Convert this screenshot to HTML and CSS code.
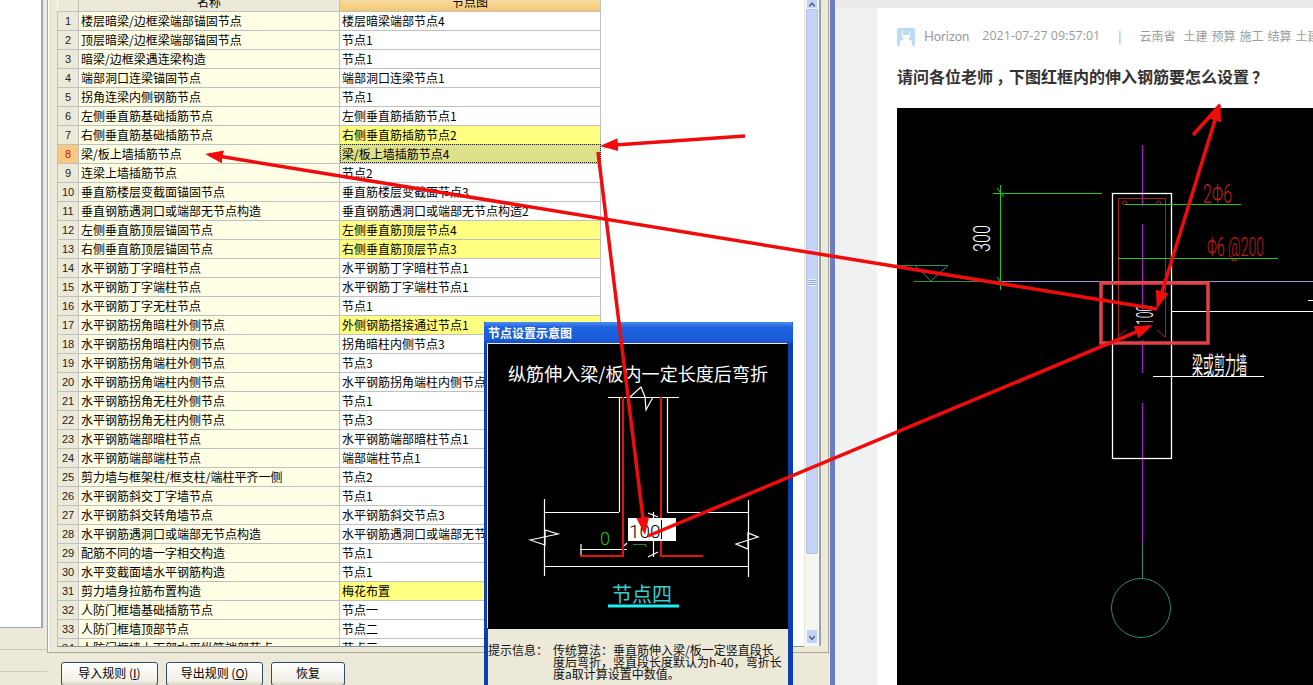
FILE: index.html
```html
<!DOCTYPE html>
<html>
    <head>
        <title>节点设置</title>
        <link rel="stylesheet" href="styles.css">
    </head>
    <body>
        <div class="desk">
            <div class="side">
                <div class="side_list"></div>
                <div class="side_row"></div>
                <div class="side_row"></div>
            </div>
            <div class="main">
                <div class="rule_panel">
                    <div class="grid">
                        <table class="rules">
                            <colgroup><col class="col_no"><col class="col_name"><col class="col_value"></colgroup>
                            <tr class="head"><th></th><th><span>名称</span></th><th class="head_on"><span>节点图</span></th></tr>
                            <tr><td class="no">1</td><td class="name">楼层暗梁/边框梁端部锚固节点</td><td>楼层暗梁端部节点4</td></tr>
                            <tr><td class="no">2</td><td class="name">顶层暗梁/边框梁端部锚固节点</td><td>节点1</td></tr>
                            <tr><td class="no">3</td><td class="name">暗梁/边框梁遇连梁构造</td><td>节点1</td></tr>
                            <tr><td class="no">4</td><td class="name">端部洞口连梁锚固节点</td><td>端部洞口连梁节点1</td></tr>
                            <tr><td class="no">5</td><td class="name">拐角连梁内侧钢筋节点</td><td>节点1</td></tr>
                            <tr><td class="no">6</td><td class="name">左侧垂直筋基础插筋节点</td><td>左侧垂直筋插筋节点1</td></tr>
                            <tr><td class="no">7</td><td class="name">右侧垂直筋基础插筋节点</td><td class="changed">右侧垂直筋插筋节点2</td></tr>
                            <tr><td class="no no_on">8</td><td class="name">梁/板上墙插筋节点</td><td class="picked">梁/板上墙插筋节点4</td></tr>
                            <tr><td class="no">9</td><td class="name">连梁上墙插筋节点</td><td>节点2</td></tr>
                            <tr><td class="no">10</td><td class="name">垂直筋楼层变截面锚固节点</td><td>垂直筋楼层变截面节点3</td></tr>
                            <tr><td class="no">11</td><td class="name">垂直钢筋遇洞口或端部无节点构造</td><td>垂直钢筋遇洞口或端部无节点构造2</td></tr>
                            <tr><td class="no">12</td><td class="name">左侧垂直筋顶层锚固节点</td><td class="changed">左侧垂直筋顶层节点4</td></tr>
                            <tr><td class="no">13</td><td class="name">右侧垂直筋顶层锚固节点</td><td class="changed">右侧垂直筋顶层节点3</td></tr>
                            <tr><td class="no">14</td><td class="name">水平钢筋丁字暗柱节点</td><td>水平钢筋丁字暗柱节点1</td></tr>
                            <tr><td class="no">15</td><td class="name">水平钢筋丁字端柱节点</td><td>水平钢筋丁字端柱节点1</td></tr>
                            <tr><td class="no">16</td><td class="name">水平钢筋丁字无柱节点</td><td>节点1</td></tr>
                            <tr><td class="no">17</td><td class="name">水平钢筋拐角暗柱外侧节点</td><td class="changed">外侧钢筋搭接通过节点1</td></tr>
                            <tr><td class="no">18</td><td class="name">水平钢筋拐角暗柱内侧节点</td><td>拐角暗柱内侧节点3</td></tr>
                            <tr><td class="no">19</td><td class="name">水平钢筋拐角端柱外侧节点</td><td>节点3</td></tr>
                            <tr><td class="no">20</td><td class="name">水平钢筋拐角端柱内侧节点</td><td>水平钢筋拐角端柱内侧节点1</td></tr>
                            <tr><td class="no">21</td><td class="name">水平钢筋拐角无柱外侧节点</td><td>节点1</td></tr>
                            <tr><td class="no">22</td><td class="name">水平钢筋拐角无柱内侧节点</td><td>节点3</td></tr>
                            <tr><td class="no">23</td><td class="name">水平钢筋端部暗柱节点</td><td>水平钢筋端部暗柱节点1</td></tr>
                            <tr><td class="no">24</td><td class="name">水平钢筋端部端柱节点</td><td>端部端柱节点1</td></tr>
                            <tr><td class="no">25</td><td class="name">剪力墙与框架柱/框支柱/端柱平齐一侧</td><td>节点2</td></tr>
                            <tr><td class="no">26</td><td class="name">水平钢筋斜交丁字墙节点</td><td>节点1</td></tr>
                            <tr><td class="no">27</td><td class="name">水平钢筋斜交转角墙节点</td><td>水平钢筋斜交节点3</td></tr>
                            <tr><td class="no">28</td><td class="name">水平钢筋遇洞口或端部无节点构造</td><td>水平钢筋遇洞口或端部无节点构造1</td></tr>
                            <tr><td class="no">29</td><td class="name">配筋不同的墙一字相交构造</td><td>节点1</td></tr>
                            <tr><td class="no">30</td><td class="name">水平变截面墙水平钢筋构造</td><td>节点1</td></tr>
                            <tr><td class="no">31</td><td class="name">剪力墙身拉筋布置构造</td><td class="changed">梅花布置</td></tr>
                            <tr><td class="no">32</td><td class="name">人防门框墙基础插筋节点</td><td>节点一</td></tr>
                            <tr><td class="no">33</td><td class="name">人防门框墙顶部节点</td><td>节点二</td></tr>
                            <tr><td class="no">34</td><td class="name">人防门框墙上下部水平纵筋端部节点</td><td>节点三</td></tr>
                        </table>
                    </div>
                    <div class="scrollbar">
                        <div class="scroll_btn scroll_top">
                            <svg width="13" height="8" viewBox="0 0 13 8"><path d="M3 7 L6.5 3 L10 7" fill="none" stroke="#4d6185" stroke-width="2"/></svg>
                        </div>
                        <div class="scroll_thumb"><span class="grip"></span></div>
                        <div class="scroll_rest"></div>
                        <div class="scroll_btn scroll_down">
                            <svg width="13" height="15" viewBox="0 0 13 15"><path d="M3 6 L6.5 10 L10 6" fill="none" stroke="#4d6185" stroke-width="2"/></svg>
                        </div>
                    </div>
                </div>
                <div class="actions">
                    <button class="btn" type="button">导入规则 (<u>I</u>)</button>
                    <button class="btn" type="button">导出规则 (<u>O</u>)</button>
                    <button class="btn btn_small" type="button">恢复</button>
                </div>
            </div>
            <div class="browser">
                <div class="post">
                    <div class="post_meta">
                        <svg class="avatar" width="18" height="18" viewBox="0 0 18 18">
                            <rect width="18" height="18" rx="2" fill="#bcdcf6"/>
                            <path d="M5 3 H13 V8 C13 10 11 11 11 11 L15 13 V18 H3 V13 L7 11 C7 11 5 10 5 8 Z" fill="#fff"/>
                            <rect x="6" y="3" width="6" height="4" fill="#bcdcf6"/>
                        </svg>
                        <span class="author">Horizon</span>
                        <span class="date">2021-07-27 09:57:01</span>
                        <span class="sep">|</span>
                        <span class="place">云南省</span>
                        <span class="tags">土建 预算 施工 结算 土建</span>
                    </div>
                    <h1 class="post_title">请问各位老师<span class="punct">，</span>下图红框内的伸入钢筋要怎么设置<span class="punct">？</span></h1>
                    <div class="cad_box">
                        <svg class="cad" width="416" height="577" viewBox="897 108 416 577" fill="none">
                            <g stroke="#a21fc0" stroke-width="1.300">
                                <path d="M1142.500 145 V206 M1142.500 224 V310 M1142.500 340 V373 M1142.500 403 V543"/>
                            </g>
                            <path d="M1142.500 543 V578" stroke="#25906a"/>
                            <circle cx="1141" cy="608" r="29.500" stroke="#25906a"/>
                            <rect x="1112.500" y="193.500" width="59" height="265" stroke="#fff" stroke-width="1.300"/>
                            <path d="M1118.500 337 V198.500 H1165.500 V337 M1118 337 L1126 330 M1165 337 L1157 330" stroke="#a82020"/>
                            <circle cx="1124.500" cy="203" r="2" stroke="#a82020"/>
                            <circle cx="1158.500" cy="203" r="2" stroke="#a82020"/>
                            <path d="M993 193.500 H1102 M1000.500 185 V290 M997 188 L1004 197 M997 277 L1004 286 M1125 204.500 H1241 M1118 258.500 H1278" stroke="#22c722"/>
                            <path d="M897 265.500 H948 L931 281 L915 265.500 M914 281.500 H1002" stroke="#259058"/>
                            <path d="M1002 281.500 H1313" stroke="#a48fe0"/>
                            <path d="M1172 311.500 H1313 M1153 376.500 H1264 M1308 300.500 H1313" stroke="#fff" stroke-width="1.200"/>
                            <text class="cad_text" transform="translate(990,252) rotate(-90) scale(1,1.300)" font-size="19" fill="#fff" textLength="27" lengthAdjust="spacingAndGlyphs">300</text>
                            <text class="cad_text" transform="translate(1153,325) rotate(-90) scale(1,1.300)" font-size="19" fill="#fff" textLength="20" lengthAdjust="spacingAndGlyphs">100</text>
                            <text class="cad_text" transform="translate(1203,203) scale(1,1.350)" font-size="19" fill="#c22020" textLength="29" lengthAdjust="spacingAndGlyphs">2Φ6</text>
                            <text class="cad_text" transform="translate(1207,256) scale(1,1.350)" font-size="19" fill="#c22020" textLength="57" lengthAdjust="spacingAndGlyphs">Φ6 @200</text>
                            <text class="cad_cn" transform="translate(1192,374) scale(.55,1.200)" font-size="20" fill="#fff">梁或剪力墙</text>
                        </svg>
                    </div>
                </div>
            </div>

            <div class="dialog">
                <div class="dialog_title">节点设置示意图</div>
                <svg class="scheme" width="300" height="285" viewBox="488 344 300 285" fill="none">
                    <text class="cad_cn" x="508" y="381" font-size="18" fill="#fff" textLength="260">纵筋伸入梁/板内一定长度后弯折</text>
                    <g stroke="#fff" stroke-width="1.200">
                        <path d="M608 397.500 H679 M619.500 397 V512 M667.500 397 V512 M544 512.500 H619 M667 512.500 H748 M544.500 499 V576 M748.500 500 V577 M544 566.500 H748"/>
                        <path d="M630 397 L641 387 L645 397 L646 410 L653 397 M530 540 L558 534 L545 530 L545 545 Z M736 544 L758 537 L748 533 L748 549 Z"/>
                        <path d="M580 549.500 H627 M581 544 V555 M624 546 L627 543 M653.500 512 V557 M648 513 L658 517 M648 557 L658 552"/>
                    </g>
                    <path d="M623 397 V556 H580 M661 397 V556 H703" stroke="#e31212" stroke-width="2"/>
                    <path d="M633 544.500 H646 V547" stroke="#1f8f3f"/>
                    <text class="cad_text" x="600" y="545" font-size="18" fill="#22c722">0</text>
                    <rect x="628" y="518" width="48" height="23" fill="#fff"/>
                    <text class="cad_text" x="629" y="538" font-size="19" fill="#000">100</text>
                    <path d="M661.500 520 V539" stroke="#000"/>
                    <text class="cad_cn" x="612" y="602" font-size="20" fill="#32cfd4">节点四</text>
                    <path d="M608 606 H679" stroke="#1ef0f4" stroke-width="3"/>
                </svg>
                <div class="dialog_info">
                    <span class="info_label">提示信息：</span>
                    <p class="info_text">传统算法：垂直筋伸入梁/板一定竖直段长<br>度后弯折，竖直段长度默认为h-40，弯折长<br>度a取计算设置中数值。</p>
                </div>
            </div>

            <svg class="marks" width="1313" height="685" viewBox="0 0 1313 685" fill="none">
                <defs>
                    <marker id="head" markerUnits="userSpaceOnUse" markerWidth="20" markerHeight="14" refX="14" refY="7" orient="auto-start-reverse">
                        <path d="M0 0.500 L18 7 L0 13.500 Z" fill="#f00c0c"/>
                    </marker>
                </defs>
                <rect x="1101" y="283" width="107" height="60" stroke="#e04048" stroke-width="3.500"/>
                <g stroke="#f00c0c" stroke-width="3.500">
                    <path d="M745 136 L604 145.700" marker-end="url(#head)"/>
                    <path d="M1157 309 L209 154.600" marker-end="url(#head)"/>
                    <path d="M598 152 L644.500 531" marker-end="url(#head)"/>
                    <path d="M648 536 L1149 326.700" marker-end="url(#head)"/>
                    <path d="M1219 107 L1158 305" marker-start="url(#head)" marker-end="url(#head)"/>
                    <path d="M1193 135 L1220 105"/>
                </g>
            </svg>
        </div>
    </body>
</html>
```

FILE: styles.css
```css
* {
    box-sizing: border-box;
}
html, body {
    margin: 0;
    height: 685px;
    overflow: hidden;
}
body {
    font-family: "Noto Sans CJK SC", "Liberation Sans", sans-serif;
    font-size: 12px;
    color: #000;
}
.desk {
    position: relative;
    display: flex;
    width: 1313px;
    height: 685px;
    overflow: hidden;
}

/* left stub of the other pane */
.side {
    width: 47px;
    flex: none;
    background: #ece9d8;
}
.side_list {
    width: 43px;
    height: 628px;
    background: #fff;
    border-right: 2px solid #9aa6bf;
    border-bottom: 1px solid #9aa6bf;
}
.side_row {
    height: 22px;
    border-bottom: 1px solid #cfccba;
}

/* rule window */
.main {
    width: 788px;
    flex: none;
    background: #ece9d8;
    border-right: 5px solid #6c7cc4;
}
.rule_panel {
    display: flex;
    width: 782px;
    height: 653px;
    padding-left: 9px;
    background: #ece9d8;
    border-left: 1px solid #aca899;
    border-right: 1px solid #aca899;
    border-bottom: 1px solid #aca899;
    box-shadow: inset 1px 0 0 #fff;
}
.grid {
    width: 747px;
    height: 647px;
    background: #fff;
    overflow: hidden;
    border-bottom: 1px solid #8f8f8f;
}
.rules {
    border-collapse: collapse;
    table-layout: fixed;
    width: 543px;
    line-height: 18px;
}
.col_no {
    width: 21px;
}
.col_name {
    width: 261px;
}
.col_value {
    width: 261px;
}
.rules tr {
    height: 19px;
}
.rules td {
    height: 19px;
    padding: 0 0 0 2px;
    border: 1px solid #c0c0c0;
    white-space: nowrap;
    overflow: hidden;
    background: #fff;
}
.rules .head {
    height: 11px;
}
.rules th {
    height: 11px;
    padding: 0;
    font-weight: normal;
    line-height: 4px;
    text-align: center;
    overflow: hidden;
    background: #ece9d8;
    border-right: 1px solid #c0c0c0;
    border-bottom: 1px solid #c0c0c0;
}
.rules th span {
    display: block;
    height: 10px;
    overflow: hidden;
}
.rules .head_on {
    background: linear-gradient(#f6dca0, #f6c670);
}
.rules .no {
    padding: 0;
    text-align: center;
    font-family: "Liberation Sans", sans-serif;
    font-size: 11px;
    color: #222;
    background: #ece9d8;
}
.rules .no_on {
    color: #b01818;
    background: #f8c880;
}
.rules .name {
    background: #ffffe6;
}
.rules .changed {
    background: #ffff80;
}
.rules .picked {
    background: #dde28a;
    outline: 1px dotted #222;
    outline-offset: -1px;
}

/* scrollbar */
.scrollbar {
    display: flex;
    flex-direction: column;
    width: 16px;
    height: 646px;
    margin-left: 1px;
    padding: 0 1px;
    background: #f6f6f0;
    border-right: 2px solid #9aa3a8;
}
.scroll_btn {
    flex: none;
    background: #c2d3f6;
    border: 1px solid #eef2fb;
    display: flex;
    justify-content: center;
}
.scroll_top {
    height: 9px;
    border-top: 0;
}
.scroll_down {
    height: 15px;
    margin-bottom: 2px;
}
.scroll_thumb {
    height: 545px;
    flex: none;
    padding-top: 269px;
    background: #c3d4f8;
    border: 1px solid #b3c4e8;
    border-radius: 0 0 2px 2px;
}
.grip {
    display: block;
    width: 7px;
    height: 7px;
    margin: 0 auto;
    background: repeating-linear-gradient(#eef3fd 0 1px, #8ba6e0 1px 2px);
}
.scroll_rest {
    flex: 1;
}

/* buttons under the grid */
.actions {
    display: flex;
    gap: 8px;
    padding: 9px 0 0 14px;
}
.btn {
    width: 97px;
    height: 24px;
    padding: 0 0 3px 0;
    font-family: inherit;
    font-size: 12px;
    color: #000;
    background: linear-gradient(#fff, #f2f0e6 80%, #dcd8c8);
    border: 1px solid #2f4a72;
    border-radius: 3px;
}
.btn_small {
    width: 74px;
}

/* browser page on the right */
.browser {
    flex: 1;
    min-width: 0;
    padding: 8px 0 0 42px;
    background: linear-gradient(#ebebeb 8px, #f0f1f3 8px);
}
.post {
    height: 677px;
    padding-left: 20px;
    background: #fff;
    overflow: hidden;
}
.post_meta {
    display: flex;
    align-items: flex-start;
    height: 18px;
    margin-top: 20px;
    line-height: 16px;
    color: #9b9b9b;
    font-size: 12px;
    white-space: nowrap;
}
.avatar {
    flex: none;
}
.author {
    margin-left: 9px;
    font-family: "Lato", sans-serif;
    font-size: 13px;
}
.date {
    margin-left: 13px;
    font-family: "Open Sans", sans-serif;
    font-size: 12.500px;
}
.sep {
    margin-left: 18px;
}
.place {
    margin-left: 18px;
}
.tags {
    margin-left: 8px;
    word-spacing: 1.300px;
}
.post_title {
    margin: 18px 0 0 0;
    font-size: 16px;
    font-weight: bold;
    line-height: 24px;
    color: #333;
    white-space: nowrap;
}
.punct {
    margin: 0 -3px 0 3px;
}
.cad_box {
    margin-top: 20px;
    height: 577px;
    background: #000;
}
.cad {
    display: block;
}
.cad_text {
    font-family: "Roboto", "Liberation Sans", sans-serif;
    font-weight: 300;
}
.cad_cn {
    font-family: "Noto Sans CJK SC", sans-serif;
    font-weight: 400;
}

/* floating dialog */
.dialog {
    position: absolute;
    left: 484px;
    top: 322px;
    width: 309px;
    height: 363px;
    padding: 0 5px 0 4px;
    background: #ece9d8;
    box-shadow: inset 4px 0 0 #0a3fb0, inset -5px 0 0 #0a3fb0;
}
.dialog_title {
    height: 22px;
    margin: 0 -5px 0 -4px;
    padding-left: 4px;
    font-size: 12px;
    font-weight: bold;
    line-height: 22px;
    color: #fff;
    background: linear-gradient(#4d8ef0, #1d62e0 25%, #1a5cd8 80%, #1548b8);
    border-radius: 3px 3px 0 0;
}
.scheme {
    display: block;
    background: #000;
    box-shadow: -1px -1px 0 #e8e8e8;
}
.dialog_info {
    display: flex;
    padding: 15px 0 0 0;
    line-height: 12px;
    font-size: 12px;
    color: #111;
}
.info_label {
    width: 65px;
    flex: none;
}
.info_text {
    margin: 0;
    white-space: nowrap;
}

/* the red marks somebody drew over the screenshot */
.marks {
    position: absolute;
    left: 0;
    top: 0;
    pointer-events: none;
}
```
